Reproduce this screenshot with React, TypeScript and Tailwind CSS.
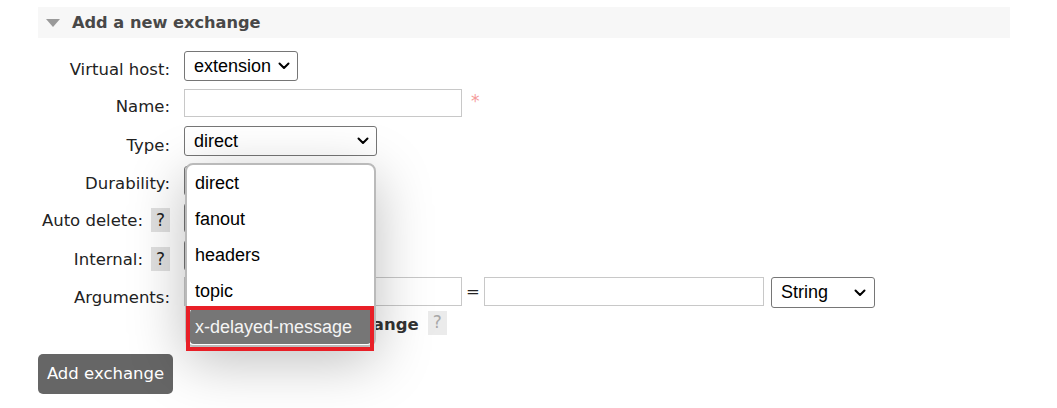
import React from "react";

const Chevron = () => (
  <svg width="12" height="8" viewBox="0 0 12 8" className="shrink-0">
    <path d="M1.5 1.5 L6 6 L10.5 1.5" fill="none" stroke="#000" strokeWidth="2" strokeLinecap="round" strokeLinejoin="round" />
  </svg>
);

const Help = ({ light }: { light?: boolean }) => (
  <span
    className={
      light
        ? "inline-flex h-[24px] w-[19px] items-center justify-center bg-[#ebebeb] text-[17px] text-[#a8a8a8]"
        : "inline-flex h-[24px] w-[19px] items-center justify-center bg-[#e0e0e0] text-[17px] text-[#222]"
    }
  >
    ?
  </span>
);

export default function App() {
  return (
    <div className="relative h-[408px] w-[1057px] overflow-hidden bg-white font-['DejaVu_Sans',Verdana,sans-serif] text-[16.5px] text-[#222]">
      <div className="pl-[38px] pt-[7px]">
        {/* Header bar */}
        <div className="flex h-[31px] w-[972px] items-center bg-[#f7f7f7] pl-[8px]">
          <svg width="14" height="8" viewBox="0 0 14 8">
            <path d="M0 0 L14 0 L7 8 Z" fill="#9a9a9a" />
          </svg>
          <h2 className="ml-[12px] text-[16.2px] font-bold leading-[20px] text-[#484848]">Add a new exchange</h2>
        </div>

        <div className="mt-[13px]">
          {/* Virtual host */}
          <div className="flex h-[38px]">
            <div className="w-[132px] shrink-0 pt-[9px] text-right leading-[19px]">Virtual host:</div>
            <div className="ml-[14px]">
              <div className="flex h-[30px] w-[114px] items-center justify-between rounded-[3px] border border-[#767676] pl-[9px] pr-[7px] font-['Liberation_Sans',Arial,sans-serif] text-[18px] text-black">
                extension
                <Chevron />
              </div>
            </div>
          </div>

          {/* Name */}
          <div className="flex h-[37px]">
            <div className="w-[132px] shrink-0 pt-[8px] text-right leading-[19px]">Name:</div>
            <div className="ml-[14px] flex items-start">
              <div className="h-[28px] w-[278px] border border-[#c8c8c8]" />
              <span className="ml-[9px] mt-[2px] text-[17px] leading-[20px] text-[#f59a9a]">*</span>
            </div>
          </div>

          {/* Type */}
          <div className="flex h-[40px]">
            <div className="w-[132px] shrink-0 pt-[10px] text-right leading-[19px]">Type:</div>
            <div className="ml-[14px]">
              <div className="flex h-[30px] w-[193px] items-center justify-between rounded-[3px] border border-[#767676] pl-[9px] pr-[7px] font-['Liberation_Sans',Arial,sans-serif] text-[18px] text-black">
                direct
                <Chevron />
              </div>
            </div>
          </div>

          {/* Durability */}
          <div className="flex h-[37px]">
            <div className="w-[132px] shrink-0 pt-[8px] text-right leading-[19px]">Durability:</div>
            <div className="ml-[14px]">
              <div className="h-[30px] w-[150px] rounded-[3px] border border-[#767676]" />
            </div>
          </div>

          {/* Auto delete */}
          <div className="flex h-[37px]">
            <div className="flex w-[132px] shrink-0 items-center justify-end gap-[8px] self-start pt-[5px] leading-[19px]">
              <span>Auto delete:</span>
              <Help />
            </div>
            <div className="ml-[14px]">
              <div className="h-[30px] w-[150px] rounded-[3px] border border-[#767676]" />
            </div>
          </div>

          {/* Internal */}
          <div className="flex h-[37px]">
            <div className="flex w-[132px] shrink-0 items-center justify-end gap-[8px] self-start pt-[7px] leading-[19px]">
              <span>Internal:</span>
              <Help />
            </div>
            <div className="ml-[14px]">
              <div className="h-[31px] w-[150px] rounded-[3px] border border-[#767676]" />
            </div>
          </div>

          {/* Arguments */}
          <div className="flex h-[34px]">
            <div className="w-[132px] shrink-0 pt-[11px] text-right leading-[19px]">Arguments:</div>
            <div className="ml-[14px] flex items-start">
              <div className="h-[29px] w-[278px] border border-[#c8c8c8]" />
              <span className="w-[22px] pt-[5px] text-center leading-[19px]">=</span>
              <div className="h-[29px] w-[280px] border border-[#c8c8c8]" />
              <div className="ml-[7px] flex h-[31px] w-[104px] items-center justify-between rounded-[3px] border border-[#767676] pl-[9px] pr-[8px] font-['Liberation_Sans',Arial,sans-serif] text-[18px] text-black">
                String
                <Chevron />
              </div>
            </div>
          </div>

          {/* Alternate exchange */}
          <div className="flex h-[42px]">
            <div className="w-[132px] shrink-0" />
            <div className="ml-[14px] flex items-start">
              <span className="pl-[10px] pt-[4px] font-bold leading-[19px] text-[#333]">Add Alternate exchange</span>
              <span className="ml-[9px]">
                <Help light />
              </span>
            </div>
          </div>

          {/* Button */}
          <button className="mt-[1px] h-[40px] w-[135px] rounded-[5px] bg-[#666666] text-[16.5px] text-white">Add exchange</button>
        </div>
      </div>

      {/* Open dropdown popup */}
      <div className="absolute left-[185px] top-[163px] w-[191px] rounded-[8px] border-2 border-[#bababa] bg-white font-['Liberation_Sans',Arial,sans-serif] text-[18px] text-black shadow-[0_14px_56px_rgba(0,0,0,0.26)]">
        <div className="flex h-[36px] items-center pl-[8px] pt-[1px]">direct</div>
        <div className="flex h-[36px] items-center pl-[8px] pt-[1px]">fanout</div>
        <div className="flex h-[36px] items-center pl-[8px] pt-[1px]">headers</div>
        <div className="flex h-[36px] items-center pl-[8px] pt-[1px]">topic</div>
        <div className="mx-[3px] mb-[1px] flex h-[35px] items-center rounded-[4px] bg-[#767676] pl-[5px] pt-[1px] text-[#f4f4f4]">x-delayed-message</div>
      </div>

      {/* Red annotation box */}
      <div className="absolute left-[186px] top-[306px] h-[45px] w-[188px] border-[4px] border-[#e81f27]" />
    </div>
  );
}
